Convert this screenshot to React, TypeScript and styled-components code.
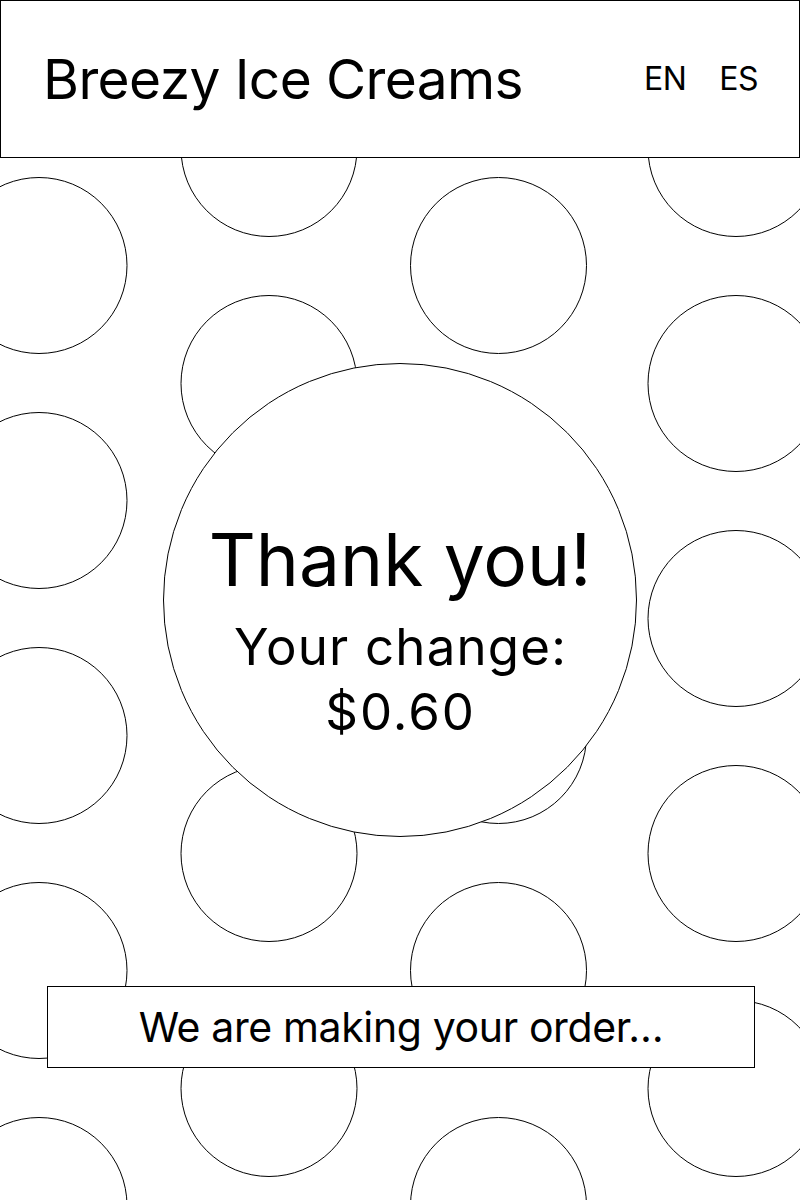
import React from "react";
import styled, { createGlobalStyle } from "styled-components";

const GlobalStyle = createGlobalStyle`
  html, body {
    margin: 0;
    padding: 0;
    background: #ffffff;
  }
  body {
    font-family: Inter, Roboto, "Liberation Sans", sans-serif;
    color: #000000;
  }
  * { box-sizing: border-box; }
`;

const Page = styled.div`
  position: relative;
  width: 800px;
  height: 1200px;
  overflow: hidden;
  background: #ffffff;
`;

const Pattern = styled.svg`
  position: absolute;
  inset: 0;
  width: 800px;
  height: 1200px;
  z-index: 0;
`;

const Layout = styled.div`
  position: relative;
  z-index: 1;
  display: flex;
  flex-direction: column;
  align-items: stretch;
  height: 100%;
`;

const Header = styled.header`
  display: flex;
  align-items: center;
  justify-content: space-between;
  height: 158px;
  padding: 0 41px 0 42px;
  border: 1px solid #000000;
  background: #ffffff;
`;

const Brand = styled.h1`
  margin: 0;
  font-size: 55px;
  font-weight: 400;
  line-height: 1;
  letter-spacing: -0.6px;
`;

const LangList = styled.nav`
  display: flex;
  align-items: center;
  gap: 33px;
`;

const LangButton = styled.span`
  font-size: 32px;
  font-weight: 400;
  line-height: 1;
  letter-spacing: -0.5px;
`;

const Bubble = styled.section`
  align-self: center;
  margin-top: 205px;
  width: 474px;
  height: 474px;
  border-radius: 50%;
  border: 1px solid #000000;
  background: #ffffff;
  display: flex;
  flex-direction: column;
  align-items: center;
  padding-top: 159px;
`;

const Thanks = styled.h2`
  margin: 0;
  font-size: 73px;
  font-weight: 400;
  line-height: 1;
  white-space: nowrap;
`;

const Change = styled.p`
  margin: 18px 0 0;
  padding-left: 1.2px;
  font-size: 51px;
  font-weight: 400;
  line-height: 65px;
  letter-spacing: 1.2px;
  text-align: center;
  white-space: nowrap;
`;

const Amount = styled.span`
  letter-spacing: 2px;
`;

const Banner = styled.div`
  margin: 149px 0 0 47px;
  width: 708px;
  height: 82px;
  border: 1px solid #000000;
  background: #ffffff;
  display: flex;
  align-items: center;
  justify-content: center;
  font-size: 41px;
  line-height: 1;
  letter-spacing: -0.37px;
`;

const colA = [39, 498.5];
const colB = [269, 736];
const rowsA = [30.5, 265.5, 500.5, 735.5, 970.5, 1205.5];
const rowsB = [-86.5, 148.5, 383.5, 618.5, 853.5, 1088.5, 1323.5];

export default function App() {
  const circles: { cx: number; cy: number }[] = [];
  colA.forEach((cx) => rowsA.forEach((cy) => circles.push({ cx, cy })));
  colB.forEach((cx) => rowsB.forEach((cy) => circles.push({ cx, cy })));

  return (
    <>
      <GlobalStyle />
      <Page>
        <Pattern viewBox="0 0 800 1200" aria-hidden="true">
          {circles.map((c, i) => (
            <circle
              key={i}
              cx={c.cx}
              cy={c.cy}
              r={88}
              fill="none"
              stroke="#000"
              strokeWidth={1}
            />
          ))}
        </Pattern>
        <Layout>
          <Header>
            <Brand>Breezy Ice Creams</Brand>
            <LangList>
              <LangButton>EN</LangButton>
              <LangButton>ES</LangButton>
            </LangList>
          </Header>
          <Bubble>
            <Thanks>Thank you!</Thanks>
            <Change>
              Your change:
              <br />
              <Amount>$0.60</Amount>
            </Change>
          </Bubble>
          <Banner>We are making your order…</Banner>
        </Layout>
      </Page>
    </>
  );
}
